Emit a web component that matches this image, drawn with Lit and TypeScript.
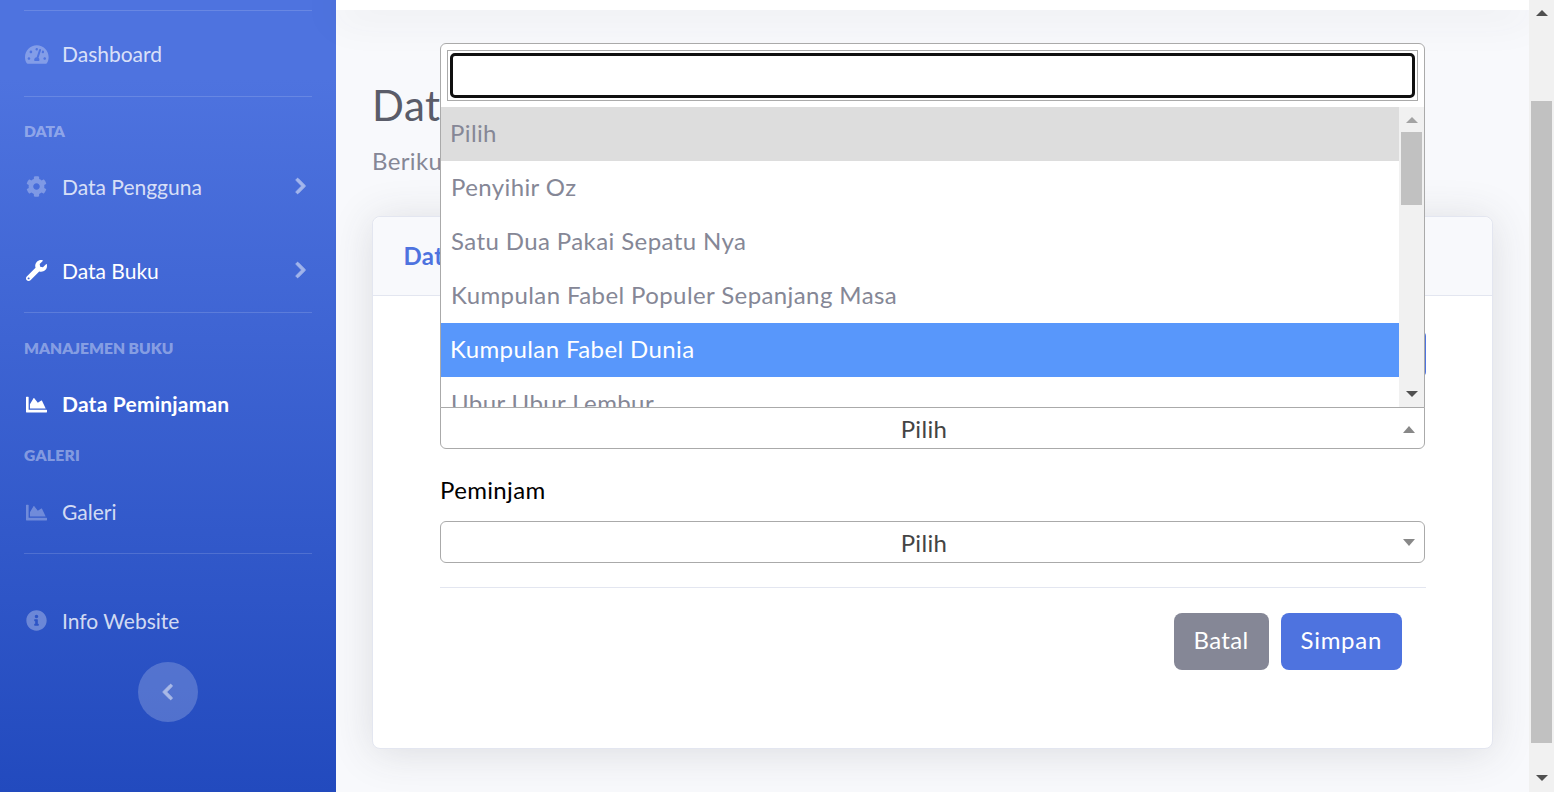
import { LitElement, html, css, svg } from 'lit';
import { customElement } from 'lit/decorators.js';

const ICONS = {
  gauge: [576, 'M288 32C128.94 32 0 160.94 0 320c0 52.8 14.25 102.26 39.06 144.8 5.61 9.62 16.3 15.2 27.44 15.2h443c11.14 0 21.83-5.58 27.44-15.2C561.75 422.26 576 372.8 576 320c0-159.06-128.94-288-288-288zm0 64c14.71 0 26.58 10.13 30.32 23.65-1.11 2.26-2.64 4.23-3.45 6.67l-9.22 27.67c-5.13 3.49-10.97 6.01-17.64 6.01-17.67 0-32-14.33-32-32S270.33 96 288 96zM96 384c-17.67 0-32-14.33-32-32s14.33-32 32-32 32 14.33 32 32-14.33 32-32 32zm48-160c-17.67 0-32-14.33-32-32s14.33-32 32-32 32 14.33 32 32-14.33 32-32 32zm246.77-72.41l-61.33 184C343.13 347.33 352 364.54 352 384c0 11.72-3.38 22.55-8.88 32H232.88c-5.5-9.45-8.88-20.28-8.88-32 0-33.94 26.5-61.43 59.9-63.59l61.34-184.01c4.17-12.56 17.73-19.45 30.36-15.17 12.57 4.19 19.35 17.79 15.17 30.36zm14.66 57.2l15.52-46.55c3.47-1.29 7.13-2.23 11.05-2.23 17.67 0 32 14.33 32 32s-14.33 32-32 32c-11.38-.01-20.89-6.28-26.57-15.22zM480 384c-17.67 0-32-14.33-32-32s14.33-32 32-32 32 14.33 32 32-14.33 32-32 32z'],
  cog: [512, 'M487.4 315.7l-42.6-24.6c4.3-23.2 4.3-47 0-70.2l42.6-24.6c4.9-2.8 7.1-8.6 5.5-14-11.1-35.6-30-67.8-54.7-94.6-3.8-4.1-10-5.1-14.8-2.3L380.8 110c-17.9-15.4-38.5-27.3-60.8-35.1V25.8c0-5.6-3.9-10.5-9.4-11.7-36.7-8.2-74.3-7.8-109.2 0-5.5 1.2-9.4 6.1-9.4 11.7V75c-22.2 7.9-42.8 19.8-60.8 35.1L88.7 85.5c-4.9-2.8-11-1.9-14.8 2.3-24.7 26.7-43.6 58.9-54.7 94.6-1.7 5.4.6 11.2 5.5 14L67.3 221c-4.3 23.2-4.3 47 0 70.2l-42.6 24.6c-4.9 2.8-7.1 8.6-5.5 14 11.1 35.6 30 67.8 54.7 94.6 3.8 4.1 10 5.1 14.8 2.3l42.6-24.6c17.9 15.4 38.5 27.3 60.8 35.1v49.2c0 5.6 3.9 10.5 9.4 11.7 36.7 8.2 74.3 7.8 109.2 0 5.5-1.2 9.4-6.1 9.4-11.7v-49.2c22.2-7.9 42.8-19.8 60.8-35.1l42.6 24.6c4.9 2.8 11 1.9 14.8-2.3 24.7-26.7 43.6-58.9 54.7-94.6 1.5-5.5-.7-11.3-5.6-14.1zM256 336c-44.1 0-80-35.9-80-80s35.9-80 80-80 80 35.9 80 80-35.9 80-80 80z'],
  wrench: [512, 'M507.73 109.1c-2.24-9.03-13.54-12.09-20.12-5.51l-74.36 74.36-67.88-11.31-11.31-67.88 74.36-74.36c6.62-6.62 3.43-17.9-5.66-20.16-47.38-11.74-99.55.91-136.58 37.93-39.64 39.64-50.55 97.1-34.05 147.2L18.74 402.76c-24.99 24.99-24.99 65.51 0 90.5 24.99 24.99 65.51 24.99 90.5 0l213.21-213.21c50.12 16.71 107.47 5.68 147.37-34.22 37.07-37.07 49.7-89.32 37.91-136.73zM64 472c-13.25 0-24-10.75-24-24 0-13.26 10.75-24 24-24s24 10.74 24 24c0 13.25-10.75 24-24 24z'],
  chart: [512, 'M500 384c6.6 0 12 5.4 12 12v40c0 6.6-5.4 12-12 12H12c-6.6 0-12-5.4-12-12V76c0-6.6 5.4-12 12-12h40c6.6 0 12 5.4 12 12v308h436zM372.7 159.5L288 216l-85.3-113.7c-5.1-6.8-15.5-6.3-19.9 1L96 248v104h384l-89.9-187.8c-3.2-6.5-11.4-8.7-17.4-4.7z'],
  info: [512, 'M256 8C119.043 8 8 119.083 8 256c0 136.997 111.043 248 248 248s248-111.003 248-248C504 119.083 392.957 8 256 8zm0 110c23.196 0 42 18.804 42 42s-18.804 42-42 42-42-18.804-42-42 18.804-42 42-42zm56 254c0 6.627-5.373 12-12 12h-88c-6.627 0-12-5.373-12-12v-24c0-6.627 5.373-12 12-12h12v-64h-12c-6.627 0-12-5.373-12-12v-24c0-6.627 5.373-12 12-12h64c6.627 0 12 5.373 12 12v100h12c6.627 0 12 5.373 12 12v24z'],
  right: [320, 'M285.476 272.971L91.132 467.314c-9.373 9.373-24.569 9.373-33.941 0l-22.667-22.667c-9.357-9.357-9.375-24.522-.04-33.901L188.505 256 34.484 101.255c-9.335-9.379-9.317-24.544.04-33.901l22.667-22.667c9.373-9.373 24.569-9.373 33.941 0L285.475 239.03c9.373 9.372 9.373 24.568.001 33.941z'],
  left: [320, 'M34.52 239.03L228.87 44.69c9.37-9.37 24.57-9.37 33.94 0l22.67 22.67c9.36 9.36 9.37 24.52.04 33.9L131.49 256l154.02 154.75c9.34 9.38 9.32 24.54-.04 33.9l-22.67 22.67c-9.37 9.37-24.57 9.37-33.94 0L34.52 272.97c-9.37-9.37-9.37-24.57 0-33.94z'],
} as const;

type IconName = keyof typeof ICONS;

const icon = (name: IconName) => {
  const [w, d] = ICONS[name];
  return html`<svg viewBox="0 0 ${w} 512" fill="currentColor">${svg`<path d=${d}></path>`}</svg>`;
};

const OPTIONS = [
  'Pilih',
  'Penyihir Oz',
  'Satu Dua Pakai Sepatu Nya',
  'Kumpulan Fabel Populer Sepanjang Masa',
  'Kumpulan Fabel Dunia',
  'Ubur Ubur Lembur',
];

@customElement('app-root')
export class AppRoot extends LitElement {
  static styles = css`
    :host {
      display: flex;
      height: 792px;
      overflow: hidden;
      background: #f8f9fc;
      font-family: Lato, 'Noto Sans', sans-serif;
      font-size: 24px;
      letter-spacing: 0.35px;
      line-height: 36px;
      color: #858796;
    }

    /* sidebar */
    .sidebar {
      width: 336px;
      flex: none;
      display: flex;
      flex-direction: column;
      padding-top: 10px;
      box-sizing: border-box;
      background: linear-gradient(180deg, #4e73df 10%, #224abe 100%);
    }
    .rule {
      height: 1px;
      margin: 0 24px;
      flex: none;
      background: rgba(255, 255, 255, 0.15);
    }
    .rule.after-item {
      margin-top: 25px;
    }
    .heading {
      margin: 23px 24px 0;
      font-size: 15.6px;
      line-height: 23px;
      font-weight: 800;
      letter-spacing: 0;
      color: rgba(255, 255, 255, 0.4);
    }
    .heading.books {
      margin-top: 24px;
    }
    .heading.gallery {
      margin-top: 24px;
      letter-spacing: 0.3px;
    }
    .item {
      display: flex;
      align-items: center;
      height: 32px;
      margin-top: 28px;
      padding: 0 30px 0 24px;
      font-size: 21px;
      letter-spacing: 0;
      color: rgba(255, 255, 255, 0.8);
    }
    .item.first {
      margin-top: 27px;
      margin-bottom: 1px;
    }
    .item.spaced {
      margin-top: 52px;
    }
    .item.info {
      margin-top: 51px;
    }
    .item.low {
      margin-top: 29px;
    }
    .ico {
      width: 26px;
      height: 21px;
      margin: 0 13px 0 -1px;
      display: flex;
      justify-content: center;
      color: rgba(255, 255, 255, 0.3);
    }
    .ico svg {
      height: 21px;
    }
    .item.first .ico {
      margin: 0 12px 0 0;
    }
    .item.raise .ico,
    .item.raise .more {
      margin-top: -2px;
    }
    .more {
      margin-left: auto;
      height: 18px;
    }
    .more,
    .toggle svg {
      color: #fff;
      opacity: 0.5;
    }
    .more svg,
    .toggle svg {
      height: 18px;
      display: block;
    }
    .more path,
    .toggle path {
      stroke: currentColor;
      stroke-width: 28;
      stroke-linejoin: round;
    }
    .item.hover,
    .item.hover .ico {
      color: #fff;
    }
    .item.active {
      color: #fff;
      font-weight: 700;
      letter-spacing: 0.2px;
    }
    .item.active .ico {
      color: #fff;
    }
    .toggle {
      width: 60px;
      height: 60px;
      margin: 25px auto 0;
      border-radius: 50%;
      display: flex;
      align-items: center;
      justify-content: center;
      background: rgba(255, 255, 255, 0.2);
    }

    /* main column */
    .main {
      flex: 1;
      min-width: 0;
    }
    .topbar {
      height: 10px;
      background: #fff;
      box-shadow: 0 3.6px 42px rgba(58, 59, 69, 0.15);
    }
    .content {
      padding: 70px 36px 0;
    }
    h1 {
      margin: 0;
      font-size: 42px;
      line-height: 50px;
      font-weight: 400;
      letter-spacing: 0.5px;
      color: #5a5c69;
    }
    .lead {
      margin: 13px 0 37px;
    }
    .card {
      background: #fff;
      border: 1px solid #e3e6f0;
      border-radius: 8px;
      box-shadow: 0 3.6px 42px rgba(58, 59, 69, 0.15);
    }
    .card-head {
      height: 79px;
      padding-left: 30.5px;
      display: flex;
      align-items: center;
      box-sizing: border-box;
      background: #f8f9fc;
      border-bottom: 1px solid #e3e6f0;
      border-radius: 8px 8px 0 0;
      font-weight: 700;
      color: #4e73df;
    }
    .card-body {
      padding: 35px 66px 78px 67px;
    }
    .behind {
      height: 46px;
      margin-bottom: 30px;
      border-radius: 5px;
      background: #4e73df;
    }
    .select {
      position: relative;
      width: 985px;
      height: 42px;
      box-sizing: border-box;
      padding: 1px 17px 0 0;
      display: flex;
      align-items: center;
      justify-content: center;
      background: #fff;
      border: 1px solid #aaa;
      border-radius: 6px;
      color: #444;
    }
    .select.open {
      border-top-left-radius: 0;
      border-top-right-radius: 0;
    }
    .caret {
      position: absolute;
      right: 9px;
      top: 50%;
      margin-top: -3px;
      width: 0;
      height: 0;
      border-left: 6px solid transparent;
      border-right: 6px solid transparent;
    }
    .caret.down {
      border-top: 7px solid #888;
    }
    .caret.up {
      margin-top: -2px;
      border-bottom: 7px solid #888;
    }
    label {
      display: block;
      margin: 23px 0 13px;
      color: #000;
    }
    hr {
      margin: 24px 0 25px;
      border: 0;
      border-top: 1px solid #e3e6f0;
    }
    .actions {
      display: flex;
      justify-content: flex-end;
      gap: 12px;
      padding-right: 24px;
    }
    .btn {
      height: 57px;
      padding: 0 20px 3px;
      box-sizing: border-box;
      display: flex;
      align-items: center;
      border-radius: 8px;
      color: #fff;
    }
    .btn.cancel {
      background: #858796;
      letter-spacing: 0.35px;
    }
    .btn.save {
      background: #4e73df;
      letter-spacing: 0.7px;
    }

    /* open dropdown, sits over the form and page header */
    .dropdown {
      position: absolute;
      left: -1px;
      right: -1px;
      bottom: 100%;
      height: 365px;
      box-sizing: border-box;
      display: flex;
      flex-direction: column;
      background: #fff;
      border: 1px solid #aaa;
      border-radius: 6px 6px 0 0;
      overflow: hidden;
      color: #858796;
    }
    .search {
      height: 51px;
      margin: 6px;
      flex: none;
      padding: 2px;
      box-sizing: border-box;
      border: 1px solid #aaa;
    }
    .search input {
      display: block;
      width: 100%;
      height: 100%;
      box-sizing: border-box;
      padding: 0 6px;
      border: 3px solid #101010;
      border-radius: 5px;
      outline: none;
      background: #fff;
    }
    .results {
      flex: 1;
      min-height: 0;
      display: flex;
    }
    .options {
      flex: 1;
      min-width: 0;
      overflow: hidden;
    }
    .option {
      height: 54px;
      padding: 0 10px 2px;
      box-sizing: border-box;
      display: flex;
      align-items: center;
      letter-spacing: 0.4px;
    }
    .option.current {
      background: #ddd;
      padding-left: 9px;
    }
    .option.hl {
      background: #5897fb;
      color: #fff;
      padding-left: 9px;
    }
    .mini-bar {
      width: 25px;
      flex: none;
      display: flex;
      flex-direction: column;
      align-items: center;
      background: #f1f1f1;
    }
    .mini-bar .thumb {
      width: 21px;
      height: 73px;
      margin-top: 4px;
      background: #c1c1c1;
    }
    .arrow {
      width: 0;
      height: 0;
      border-left: 6px solid transparent;
      border-right: 6px solid transparent;
    }
    .arrow.up {
      border-bottom: 6px solid #a3a3a3;
      margin-top: 10px;
      margin-bottom: 5px;
    }
    .arrow.down {
      border-top: 6px solid #505050;
      margin-top: auto;
      margin-bottom: 10px;
    }

    /* page scrollbar */
    .page-bar {
      width: 25px;
      flex: none;
      display: flex;
      flex-direction: column;
      align-items: center;
      background: #f1f1f1;
    }
    .page-bar .thumb {
      width: 21px;
      height: 642px;
      margin-top: 85px;
      background: #c1c1c1;
    }
    .page-bar .arrow.up {
      border-bottom-color: #505050;
      margin-top: 10px;
      margin-bottom: 0;
    }
    .page-bar .arrow.down {
      margin-bottom: 11px;
    }
  `;

  navItem(label: string, name: IconName, cls = '', more = false) {
    return html`
      <div class="item ${cls}">
        <span class="ico">${icon(name)}</span>
        <span>${label}</span>
        ${more ? html`<span class="more">${icon('right')}</span>` : ''}
      </div>
    `;
  }

  render() {
    return html`
      <aside class="sidebar">
        <div class="rule"></div>
        ${this.navItem('Dashboard', 'gauge', 'first')}
        <div class="rule after-item"></div>
        <div class="heading">DATA</div>
        ${this.navItem('Data Pengguna', 'cog', 'raise', true)}
        ${this.navItem('Data Buku', 'wrench', 'spaced hover raise', true)}
        <div class="rule after-item"></div>
        <div class="heading books">MANAJEMEN BUKU</div>
        ${this.navItem('Data Peminjaman', 'chart', 'active')}
        <div class="heading gallery">GALERI</div>
        ${this.navItem('Galeri', 'chart', 'low')}
        <div class="rule after-item"></div>
        ${this.navItem('Info Website', 'info', 'info raise')}
        <div class="toggle">${icon('left')}</div>
      </aside>

      <div class="main">
        <div class="topbar"></div>
        <div class="content">
          <h1>Data Peminjaman</h1>
          <div class="lead">Berikut</div>
          <div class="card">
            <div class="card-head">Data Peminjaman</div>
            <div class="card-body">
              <div class="behind"></div>
              <div class="select open">
                Pilih
                <span class="caret up"></span>
                <div class="dropdown">
                  <div class="search"><input type="text" /></div>
                  <div class="results">
                    <div class="options">
                      ${OPTIONS.map(
                        (o, i) => html`
                          <div class="option ${i === 0 ? 'current' : i === 4 ? 'hl' : ''}">${o}</div>
                        `
                      )}
                    </div>
                    <div class="mini-bar">
                      <span class="arrow up"></span>
                      <div class="thumb"></div>
                      <span class="arrow down"></span>
                    </div>
                  </div>
                </div>
              </div>
              <label>Peminjam</label>
              <div class="select">Pilih<span class="caret down"></span></div>
              <hr />
              <div class="actions">
                <div class="btn cancel">Batal</div>
                <div class="btn save">Simpan</div>
              </div>
            </div>
          </div>
        </div>
      </div>

      <div class="page-bar">
        <span class="arrow up"></span>
        <div class="thumb"></div>
        <span class="arrow down"></span>
      </div>
    `;
  }
}
